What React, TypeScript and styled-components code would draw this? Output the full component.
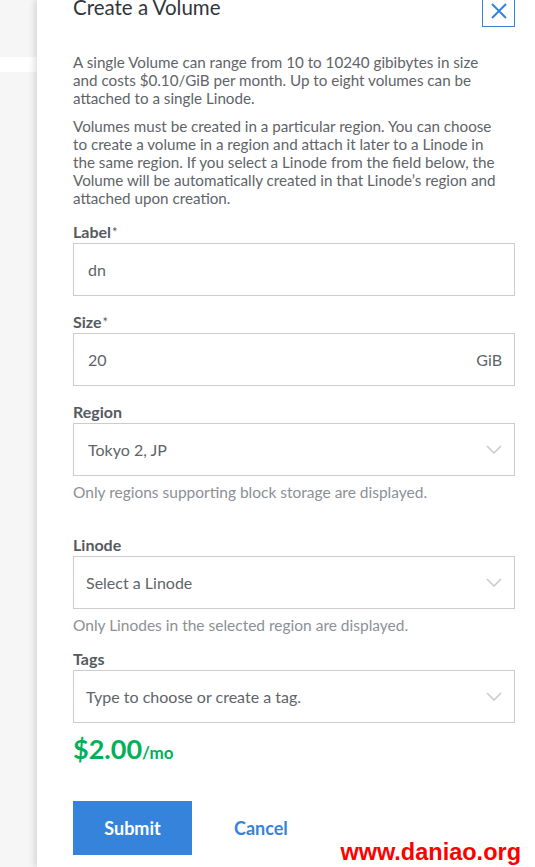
import React from "react"
import styled, { createGlobalStyle } from "styled-components"

const GlobalStyle = createGlobalStyle`
	html, body {
		margin: 0;
		padding: 0;
		height: 867px;
		overflow: hidden;
		background: #ffffff;
		font-family: Lato, "Noto Sans", sans-serif;
	}
`

const Page = styled.div`
	display: flex;
	height: 867px;
	width: 535px;
	position: relative;
`

const Backdrop = styled.div`
	width: 37px;
	flex-shrink: 0;
	background: #f6f6f6;
	display: flex;
	flex-direction: column;
`

const BackdropRow = styled.div`
	margin-top: 57px;
	height: 15px;
	background: #ffffff;
`

const Drawer = styled.div`
	flex: 1;
	background: #ffffff;
	box-shadow: -3px 0 6px rgba(0, 0, 0, 0.12);
	padding: 0 20px 0 36px;
	display: flex;
	flex-direction: column;
	z-index: 1;
`

const Header = styled.div`
	display: flex;
	justify-content: space-between;
	align-items: flex-start;
	margin-top: -6px;
`

const Title = styled.h2`
	margin: 0;
	font-size: 20.5px;
	line-height: 26px;
	font-weight: 400;
	color: #32363c;
`

const CloseButton = styled.button`
	width: 33px;
	height: 33px;
	border: 1px solid #3683dc;
	background: #ffffff;
	padding: 0;
	display: flex;
	align-items: center;
	justify-content: center;
	cursor: pointer;
`

const Copy = styled.p<{ $top: number }>`
	margin: ${p => p.$top}px 0 0;
	font-size: 15.2px;
	line-height: 18px;
	color: #606469;
`

const CopyLine = styled.span`
	display: block;
	white-space: nowrap;
`

const Field = styled.div<{ $top: number }>`
	margin-top: ${p => p.$top}px;
	display: flex;
	flex-direction: column;
`

const Label = styled.label`
	font-size: 16px;
	line-height: 18px;
	font-weight: 700;
	color: #555a5f;
	margin-bottom: 2px;
`

const Required = styled.span`
	font-weight: 400;
	font-size: 13px;
	vertical-align: top;
	margin-left: 1px;
`

const InputBox = styled.div`
	height: 53px;
	box-sizing: border-box;
	border: 1px solid #cccccc;
	display: flex;
	align-items: center;
	justify-content: space-between;
	padding: 0 12px 0 14px;
	font-size: 16px;
	color: #606469;
`

const SelectBox = styled(InputBox)`
	padding-left: 12px;
`

const Helper = styled.div`
	margin-top: 7px;
	font-size: 15.5px;
	line-height: 18px;
	color: #8c9096;
`

const Price = styled.div`
	margin-top: 10px;
	font-size: 27px;
	line-height: 32px;
	font-weight: 700;
	color: #00b159;
`

const PerMonth = styled.span`
	font-size: 17px;
`

const Actions = styled.div`
	margin-top: 32px;
	display: flex;
	align-items: center;
	gap: 42px;
`

const Submit = styled.button`
	width: 119px;
	height: 54px;
	border: none;
	background: #3683dc;
	color: #ffffff;
	font-family: inherit;
	font-size: 18px;
	font-weight: 700;
	cursor: pointer;
`

const Cancel = styled.button`
	border: none;
	background: none;
	padding: 0;
	color: #3683dc;
	font-family: inherit;
	font-size: 18px;
	font-weight: 700;
	cursor: pointer;
`

const Watermark = styled.div`
	position: absolute;
	right: 14px;
	bottom: 1px;
	font-family: "Liberation Sans", Arial, sans-serif;
	font-size: 23.5px;
	font-weight: 700;
	color: #ff0000;
	text-shadow: 1px 1px 0 #fff, -1px -1px 0 #fff, 1px -1px 0 #fff, -1px 1px 0 #fff;
	z-index: 2;
`

const Chevron = () => (
	<svg width="16" height="9" viewBox="0 0 16 9">
		<path d="M1 1 L8 8 L15 1" fill="none" stroke="#c9cbcf" strokeWidth="1.6" />
	</svg>
)

const CloseIcon = () => (
	<svg width="18" height="18" viewBox="0 0 18 18">
		<path d="M2 2 L16 16 M16 2 L2 16" stroke="#3683dc" strokeWidth="2" />
	</svg>
)

const intro = [
	"A single Volume can range from 10 to 10240 gibibytes in size",
	"and costs $0.10/GiB per month. Up to eight volumes can be",
	"attached to a single Linode.",
]

const regionNote = [
	"Volumes must be created in a particular region. You can choose",
	"to create a volume in a region and attach it later to a Linode in",
	"the same region. If you select a Linode from the field below, the",
	"Volume will be automatically created in that Linode’s region and",
	"attached upon creation.",
]

export default function App() {
	return (
		<Page>
			<GlobalStyle />
			<Backdrop>
				<BackdropRow />
			</Backdrop>
			<Drawer>
				<Header>
					<Title>Create a Volume</Title>
					<CloseButton aria-label="Close"><CloseIcon /></CloseButton>
				</Header>
				<Copy $top={26}>
					{intro.map(line => <CopyLine key={line}>{line}</CopyLine>)}
				</Copy>
				<Copy $top={10}>
					{regionNote.map(line => <CopyLine key={line}>{line}</CopyLine>)}
				</Copy>
				<Field $top={16}>
					<Label>Label<Required>*</Required></Label>
					<InputBox>dn</InputBox>
				</Field>
				<Field $top={17}>
					<Label>Size<Required>*</Required></Label>
					<InputBox><span>20</span><span>GiB</span></InputBox>
				</Field>
				<Field $top={17}>
					<Label>Region</Label>
					<InputBox><span>Tokyo 2, JP</span><Chevron /></InputBox>
					<Helper>Only regions supporting block storage are displayed.</Helper>
				</Field>
				<Field $top={35}>
					<Label>Linode</Label>
					<SelectBox><span>Select a Linode</span><Chevron /></SelectBox>
					<Helper>Only Linodes in the selected region are displayed.</Helper>
				</Field>
				<Field $top={16}>
					<Label>Tags</Label>
					<SelectBox><span>Type to choose or create a tag.</span><Chevron /></SelectBox>
				</Field>
				<Price>$2.00<PerMonth>/mo</PerMonth></Price>
				<Actions>
					<Submit>Submit</Submit>
					<Cancel>Cancel</Cancel>
				</Actions>
			</Drawer>
			<Watermark>www.daniao.org</Watermark>
		</Page>
	)
}
